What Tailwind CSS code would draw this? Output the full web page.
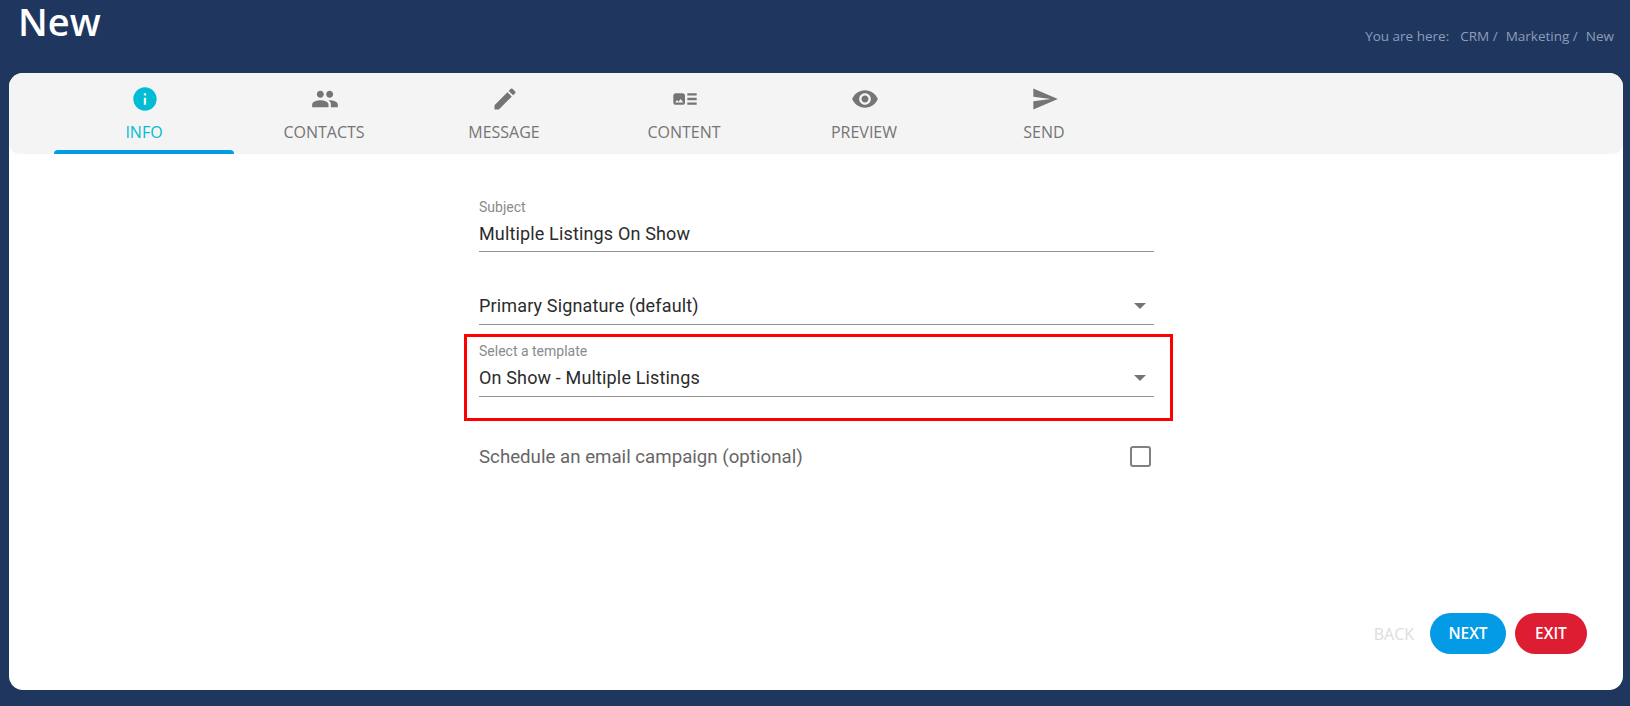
<!DOCTYPE html>
<html lang="en">
<head>
  <meta charset="UTF-8" />
  <title>New</title>
  <script src="https://cdn.jsdelivr.net/npm/@tailwindcss/browser@4"></script>
</head>
<body class="h-[706px] overflow-hidden bg-[#1f365f] font-['Open_Sans',sans-serif]">
  <!-- Page header -->
  <header class="h-[73px] pl-[18px] pr-[16px] flex justify-between">
    <h1 class="text-[38px] leading-[43px] font-semibold text-white">New</h1>
    <nav class="mt-[26px] flex h-[20px] items-center text-[13.5px] text-[#8f9db8]">
      <span class="mr-[11px]">You are here:</span>
      <span class="mr-[8px]">CRM /</span>
      <span class="mr-[8px]">Marketing /</span>
      <span>New</span>
    </nav>
  </header>

  <main class="mx-[9px] mr-[7px] h-[617px] rounded-[14px] bg-white flex flex-col overflow-hidden">
    <!-- Tabs -->
    <div class="h-[81px] shrink-0 bg-[#f4f4f4] rounded-b-[10px] pl-[45px] flex">
      <div class="relative w-[180px] flex flex-col items-center pt-[12px] text-[#00bcd4]">
        <svg class="ml-[1px] w-[28px] h-[28px]" viewBox="0 0 24 24" fill="currentColor"><path d="M12 2C6.48 2 2 6.48 2 12s4.48 10 10 10 10-4.48 10-10S17.52 2 12 2zm1 15h-2v-6h2v6zm0-8h-2V7h2v2z"/></svg>
        <span class="mt-[9px] text-[16px] leading-[20px]">INFO</span>
        <span class="absolute bottom-0 left-0 right-0 h-[4px] rounded-t-[4px] bg-[#039be5]"></span>
      </div>
      <div class="w-[180px] flex flex-col items-center pt-[12px] text-[#757575]">
        <svg class="ml-[1px] w-[28px] h-[28px]" viewBox="0 0 24 24" fill="currentColor"><path d="M16 11c1.66 0 2.99-1.34 2.99-3S17.66 5 16 5c-1.66 0-3 1.34-3 3s1.34 3 3 3zm-8 0c1.66 0 2.99-1.34 2.99-3S9.66 5 8 5C6.34 5 5 6.34 5 8s1.34 3 3 3zm0 2c-2.33 0-7 1.17-7 3.5V19h14v-2.5c0-2.33-4.67-3.5-7-3.5zm8 0c-.29 0-.62.02-.97.05 1.16.84 1.97 1.97 1.97 3.45V19h6v-2.5c0-2.33-4.67-3.5-7-3.5z"/></svg>
        <span class="mt-[9px] text-[16px] leading-[20px]">CONTACTS</span>
      </div>
      <div class="w-[180px] flex flex-col items-center pt-[12px] text-[#757575]">
        <svg class="ml-[1px] w-[28px] h-[28px]" viewBox="0 0 24 24" fill="currentColor"><path d="M3 17.25V21h3.75L17.81 9.94l-3.75-3.75L3 17.25zM20.71 7.04c.39-.39.39-1.02 0-1.41l-2.34-2.34c-.39-.39-1.02-.39-1.41 0l-1.83 1.83 3.75 3.75 1.83-1.83z"/></svg>
        <span class="mt-[9px] text-[16px] leading-[20px]">MESSAGE</span>
      </div>
      <div class="w-[180px] flex flex-col items-center pt-[12px] text-[#757575]">
        <svg class="ml-[1px] w-[28px] h-[28px]" viewBox="0 0 24 24" fill="currentColor"><path d="M22 13h-8v-2h8v2zm0-6h-8v2h8V7zm-8 10h8v-2h-8v2zm-2-8v6c0 1.1-.9 2-2 2H4c-1.1 0-2-.9-2-2V9c0-1.1.9-2 2-2h6c1.1 0 2 .9 2 2zm-1.5 6l-2.25-3-1.75 2.26-1.25-1.51L3.5 15h7z"/></svg>
        <span class="mt-[9px] text-[16px] leading-[20px]">CONTENT</span>
      </div>
      <div class="w-[180px] flex flex-col items-center pt-[12px] text-[#757575]">
        <svg class="ml-[1px] w-[28px] h-[28px]" viewBox="0 0 24 24" fill="currentColor"><path d="M12 4.5C7 4.5 2.73 7.61 1 12c1.73 4.39 6 7.5 11 7.5s9.27-3.11 11-7.5c-1.73-4.39-6-7.5-11-7.5zM12 17c-2.76 0-5-2.24-5-5s2.24-5 5-5 5 2.24 5 5-2.24 5-5 5zm0-8c-1.66 0-3 1.34-3 3s1.34 3 3 3 3-1.34 3-3-1.34-3-3-3z"/></svg>
        <span class="mt-[9px] text-[16px] leading-[20px]">PREVIEW</span>
      </div>
      <div class="w-[180px] flex flex-col items-center pt-[12px] text-[#757575]">
        <svg class="ml-[1px] w-[28px] h-[28px]" viewBox="0 0 24 24" fill="currentColor"><path d="M2.01 21L23 12 2.01 3 2 10l15 2-15 2z"/></svg>
        <span class="mt-[9px] text-[16px] leading-[20px]">SEND</span>
      </div>
    </div>

    <!-- Form -->
    <form class="relative ml-[470px] mt-[45px] w-[675px] font-['Roboto',sans-serif]">
      <label class="block text-[14px] leading-[16px] text-[#8a8a8a]">Subject</label>
      <div class="mt-[5px] h-[32px] pt-[1px] border-b border-[#949494] text-[18px] tracking-[0.15px] leading-[26px] text-[#2b2b2b]">Multiple Listings On Show</div>

      <div class="mt-[41px] h-[32px] border-b border-[#949494] text-[18px] tracking-[0.15px] leading-[26px] text-[#2b2b2b] flex justify-between">
        <span>Primary Signature (default)</span>
        <span class="mt-[10px] mr-[8px] h-0 w-0 border-x-[6px] border-t-[6px] border-x-transparent border-t-[#757575]"></span>
      </div>

      <div class="mt-[18px]">
        <label class="block text-[14px] leading-[16px] text-[#8a8a8a]">Select a template</label>
        <div class="mt-[6px] h-[32px] border-b border-[#949494] text-[18px] tracking-[0.15px] leading-[26px] text-[#2b2b2b] flex justify-between">
          <span>On Show - Multiple Listings</span>
          <span class="mt-[10px] mr-[8px] h-0 w-0 border-x-[6px] border-t-[6px] border-x-transparent border-t-[#757575]"></span>
        </div>
      </div>

      <div class="mt-[48px] pr-[3px] flex items-center justify-between text-[18.7px] leading-[24px] text-[#666666]">
        <span>Schedule an email campaign (optional)</span>
        <span class="-mt-[1px] h-[21px] w-[21px] rounded-[3px] border-[2.5px] border-[#808080]"></span>
      </div>

      <!-- Annotation box -->
      <div class="absolute left-[-15px] top-[135px] h-[87px] w-[709px] border-[3px] border-[#ff0000]"></div>
    </form>

    <!-- Actions -->
    <div class="mt-auto mb-[36px] mr-[36px] flex items-center justify-end text-[15.5px] font-semibold text-white">
      <span class="mr-[16px] text-[16px] font-normal text-[#dddddd]">BACK</span>
      <span class="h-[41px] w-[76px] mr-[9px] rounded-full bg-[#039be5] flex items-center justify-center">NEXT</span>
      <span class="h-[41px] w-[72px] rounded-full bg-[#dd1d32] flex items-center justify-center">EXIT</span>
    </div>
  </main>
</body>
</html>
